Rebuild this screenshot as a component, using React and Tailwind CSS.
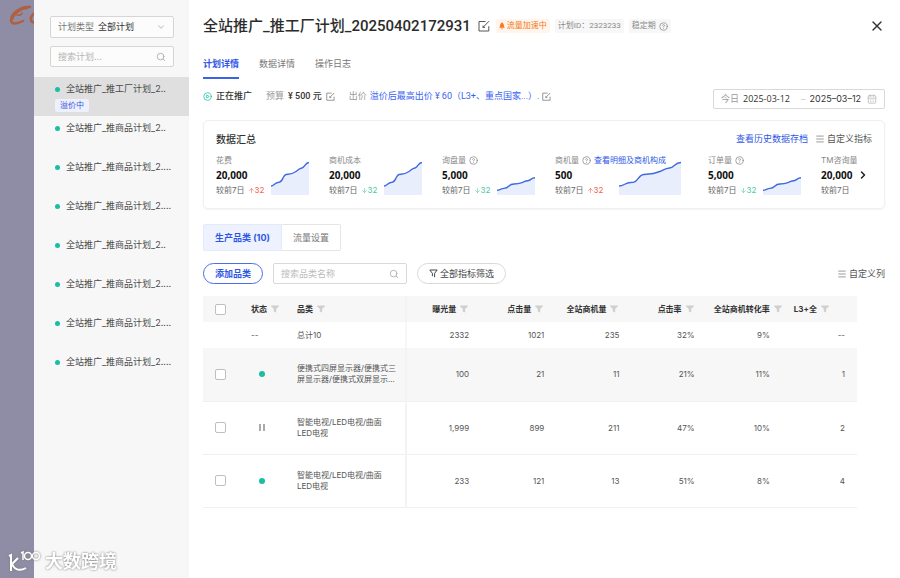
import { useState } from 'react';
import { ChevronDown, ChevronRight, Search, X, Menu, CircleHelp, CalendarDays, CirclePlay, ArrowUp, ArrowDown } from 'lucide-react';

const plans = [
  { id: 1, name: '全站推广_推工厂计划_2..', tag: '溢价中' },
  { id: 2, name: '全站推广_推商品计划_2..' },
  { id: 3, name: '全站推广_推商品计划_2....' },
  { id: 4, name: '全站推广_推商品计划_2....' },
  { id: 5, name: '全站推广_推商品计划_2..' },
  { id: 6, name: '全站推广_推商品计划_2....' },
  { id: 7, name: '全站推广_推商品计划_2....' },
  { id: 8, name: '全站推广_推商品计划_2....' },
];

const metrics = [
  { label: '花费', value: '20,000', diff: 32, up: true, chart: 'tall' },
  { label: '商机成本', value: '20,000', diff: 32, up: false, chart: 'tall' },
  { label: '询盘量', help: true, value: '5,000', diff: 32, up: false, chart: 'short' },
  { label: '商机量', help: true, link: '查看明细及商机构成', value: '500', diff: 32, up: true, chart: 'wide' },
  { label: '订单量', help: true, value: '5,000', diff: 32, up: false, chart: 'short' },
  { label: 'TM咨询量', value: '20,000', chart: 'tall' },
];

const chartSizes = {
  tall: 'w-[38px] h-[34px]',
  short: 'w-[38px] h-[18px]',
  wide: 'w-[62px] h-[34px]',
};

const numberColumns = ['曝光量', '点击量', '全站商机量', '点击率', '全站商机转化率'];

const rows = [
  { id: 1, running: true, name: '便携式四屏显示器/便携式三\n屏显示器/便携式双屏显示...', data: ['100', '21', '11', '21%', '11%', '1'] },
  { id: 2, running: false, name: '智能电视/LED电视/曲面\nLED电视', data: ['1,999', '899', '211', '47%', '10%', '2'] },
  { id: 3, running: true, name: '智能电视/LED电视/曲面\nLED电视', data: ['233', '121', '13', '51%', '8%', '4'] },
];

const EditIcon = ({ className }) => (
  <svg viewBox="0 0 12 12" className={className} fill="none" stroke="currentColor" strokeWidth="1">
    <path d="M7.5 1.5H1v9.5h9.8V6.2" />
    <path d="M5 7.4 11 1.2M5 5.6v1.8h2" />
  </svg>
);

const FunnelIcon = () => (
  <svg viewBox="0 0 8 8" className="size-2 shrink-0 text-[#cfcfcf]" fill="currentColor">
    <path d="M.2.6h7.6v1L5.2 3.8v3.8L2.8 6.6V3.8L.2 1.6z" />
  </svg>
);

const TrendChart = ({ size }) => (
  <svg viewBox="0 0 38 34" preserveAspectRatio="none" className={`mb-[2px] shrink-0 ${chartSizes[size]}`}>
    <path d="M0 25C3 25 4 21.500 7 21.500S10.500 20 12 17 14 13.500 17 13.300 22 12.500 25 10.500 28 7.500 31 7 34 1.500 38 1.500V34H0z" fill="#e9eefd" />
    <path
      d="M0 25C3 25 4 21.500 7 21.500S10.500 20 12 17 14 13.500 17 13.300 22 12.500 25 10.500 28 7.500 31 7 34 1.500 38 1.500"
      fill="none"
      stroke="#3f6ae0"
      strokeWidth="1.400"
      vectorEffect="non-scaling-stroke"
    />
  </svg>
);

const Checkbox = ({ label }) => (
  <input type="checkbox" aria-label={label} className="block size-[11px] appearance-none rounded-[2px] border border-[#bfbfbf] bg-white checked:bg-[#2f57e6]" />
);

const Sidebar = () => {
  const [active, setActive] = useState(1);

  return (
    <aside className="w-[155px] shrink-0 bg-[#f7f7f7] pt-4">
      <div className="mx-4 mr-[15px] flex h-[22px] items-center rounded-[2px] border border-[#d6d6d6] bg-[#fcfcfc] px-[7px]">
        <label htmlFor="plan-type" className="mr-1 shrink-0 text-[#777]">计划类型</label>
        <select id="plan-type" className="min-w-0 flex-1 appearance-none bg-transparent text-[#333] outline-none">
          <option>全部计划</option>
        </select>
        <ChevronDown className="size-[10px] shrink-0 text-[#aaa]" strokeWidth={2} />
      </div>
      <div className="mx-4 mt-2 mr-[15px] flex h-[21px] items-center rounded-[2px] border border-[#d6d6d6] bg-[#fcfcfc] px-[7px]">
        <input type="text" aria-label="搜索计划" placeholder="搜索计划..." className="min-w-0 flex-1 bg-transparent outline-none placeholder:text-[#b5b5b5]" />
        <Search className="size-[10px] shrink-0 text-[#aaa]" strokeWidth={2} />
      </div>

      {/* 计划列表 */}
      <ul className="mt-[10px]">
        {plans.map((plan) => (
          <li key={plan.id}>
            <button
              onClick={() => setActive(plan.id)}
              className={`flex h-[39px] w-full flex-col items-start pt-[6px] pl-[21px] text-left ${active === plan.id ? 'bg-[#dfdfdf]' : ''}`}
            >
              <span className="flex items-center gap-[6px] leading-3 whitespace-nowrap text-[#4a4a4a]">
                <span className="size-[5px] rounded-full bg-[#17bfa6]" />
                {plan.name}
              </span>
              {plan.tag && <span className="mt-1 rounded-[2px] bg-[#eef1fd] px-[5px] text-[8px] leading-[13px] text-[#3a55d8]">{plan.tag}</span>}
            </button>
          </li>
        ))}
      </ul>
    </aside>
  );
};

const PlanHeader = () => (
  <header>
    <div className="flex h-[22px] items-center font-[Roboto,'Noto_Sans_CJK_SC',sans-serif]">
      <h1 className="text-[15px] font-medium whitespace-nowrap text-[#2b2b2b]">全站推广_推工厂计划_20250402172931</h1>
      <button aria-label="编辑名称" className="mr-[6px] ml-[7px] text-[#555]"><EditIcon className="size-3" /></button>
      <div className="flex gap-[5px] text-[8px] leading-[14px] whitespace-nowrap text-[#8a8a8a]">
        <span className="flex items-center gap-[2px] rounded-[2px] bg-[#fff5ec] px-[3px] text-[#f57a23]">
          <svg viewBox="0 0 6 8" className="h-2 w-[6px]" fill="currentColor">
            <path d="M3 .3C4.600 1.500 5 2.800 5 4.200l.8 1.600H.2L1 4.200C1 2.800 1.400 1.500 3 .3zM2.200 6.200h1.600L3 7.800z" />
          </svg>
          流量加速中
        </span>
        <span className="rounded-[2px] bg-[#f7f7f7] px-[3px]">计划ID：2323233</span>
        <span className="flex items-center gap-[3px] rounded-[2px] bg-[#f7f7f7] px-[3px]">稳定期 <CircleHelp className="size-[9px]" /></span>
      </div>
      <button aria-label="关闭" className="ml-auto text-[#333]"><X className="size-4" strokeWidth={2} /></button>
    </div>

    <nav className="mt-[20px] flex gap-5 text-[#777]">
      <a href="#detail" className="border-b-2 border-[#3a62e8] pb-[6px] leading-[14px] font-bold text-[#2f57e6]">计划详情</a>
      <a href="#data" className="leading-[14px]">数据详情</a>
      <a href="#log" className="leading-[14px]">操作日志</a>
    </nav>

    <div className="mt-[10px] flex items-center whitespace-nowrap">
      <div className="flex h-5 items-center pb-[5px] font-[Roboto,'Noto_Sans_CJK_SC',sans-serif]">
        <CirclePlay className="size-[9px] text-[#17bfa6]" />
        <span className="ml-1 font-medium text-[#333]">正在推广</span>
        <span className="ml-[14px] text-[#999]">预算</span>
        <span className="ml-1 font-medium text-[#333]">¥ 500 元</span>
        <button aria-label="编辑预算" className="ml-1 text-[#777]"><EditIcon className="size-[9px]" /></button>
        <span className="ml-[14px] text-[#999]">出价</span>
        <a href="#bid" className="ml-[3px] text-[#3a62f0]">溢价后最高出价 ¥ 60（L3+、重点国家...）.</a>
        <button aria-label="编辑出价" className="ml-[3px] text-[#777]"><EditIcon className="size-[9px]" /></button>
      </div>
      <div className="ml-auto flex h-5 w-[172px] items-center rounded-[2px] border border-[#d9d9d9] px-[7px] text-[#333]">
        <label htmlFor="date-start" className="mr-1 text-[#999]">今日</label>
        <input id="date-start" type="text" defaultValue="2025-03-12" className="w-[54px] bg-transparent font-['Open_Sans'] font-medium outline-none" />
        <span className="mx-1 text-[#ccc]">–</span>
        <input aria-label="结束日期" type="text" defaultValue="2025–03–12" className="min-w-0 flex-1 bg-transparent outline-none" />
        <CalendarDays className="size-[10px] shrink-0 text-[#bbb]" />
      </div>
    </div>
  </header>
);

const Summary = () => (
  <section className="mt-[11px] rounded-[5px] border border-[#f0f0f0] px-3 py-[11px] shadow-xs shadow-black/5">
    <div className="flex h-[14px] items-center">
      <h2 className="text-[10px] font-medium text-[#333]">数据汇总</h2>
      <a href="#history" className="mr-[7px] ml-auto text-[#2f57e6]">查看历史数据存档</a>
      <button className="flex items-center gap-[2px] text-[#555]"><Menu className="size-[10px] text-[#888]" />自定义指标</button>
    </div>
    <div className="mt-[7px] flex items-center">
      <div className="flex min-w-0 flex-1 gap-5 overflow-hidden">
        {metrics.map((m) => (
          <div key={m.label} className={`flex shrink-0 items-end justify-between text-[8px] whitespace-nowrap ${m.chart === 'wide' ? 'w-[133px] pr-[7px]' : 'w-[93px]'}`}>
            <div className="w-[54px]">
              <div className="flex h-[14px] items-center gap-[3px] text-[#888]">
                {m.label}
                {m.help && <CircleHelp className="size-[9px] shrink-0" />}
                {m.link && <a href="#leads" className="text-[#2f57e6]">{m.link}</a>}
              </div>
              <div className="font-['Open_Sans'] text-[10px] leading-4 font-bold text-[#111]">{m.value}</div>
              <div className="flex h-[14px] items-center text-[#666]">
                较前7日
                {m.diff && (
                  <span className={`ml-[3px] flex items-center ${m.up ? 'text-[#f5634d]' : 'text-[#4cc9a4]'}`}>
                    {m.up ? <ArrowUp className="size-[7px]" /> : <ArrowDown className="size-[7px]" />}
                    {m.diff}
                  </span>
                )}
              </div>
            </div>
            <TrendChart size={m.chart} />
          </div>
        ))}
      </div>
      <button aria-label="下一页" className="flex w-[15px] shrink-0 text-[#222]"><ChevronRight className="size-3" strokeWidth={3} /></button>
    </div>
  </section>
);

const CategoryTable = () => (
  <div className="mt-3 pr-7">
    <table className="w-full table-fixed border-collapse text-[8px] text-[#555]">
      <thead>
        <tr className="h-[26px] bg-[#f7f7f7] text-[#333]">
          <th className="w-9 pl-3"><Checkbox label="全选" /></th>
          <th className="w-[46px] pl-3"><span className="flex items-center gap-1">状态 <FunnelIcon /></span></th>
          <th className="w-[121px] border-r-2 border-[#f3f3f3] pl-3"><span className="flex items-center gap-1">品类 <FunnelIcon /></span></th>
          {numberColumns.map((name) => (
            <th key={name} className={name === '全站商机转化率' ? 'pr-0' : 'pr-[13px]'}>
              <span className="flex items-center justify-end gap-1 whitespace-nowrap">{name} <FunnelIcon /></span>
            </th>
          ))}
          <th className="pl-3"><span className="flex items-center gap-1">L3+全 <FunnelIcon /></span></th>
        </tr>
      </thead>
      <tbody>
        <tr className="h-[26px]">
          <td />
          <td className="pl-3">--</td>
          <td className="border-r-2 border-[#f7f7f7] pl-3">总计10</td>
          {['2332', '1021', '235', '32%', '9%', '--'].map((v) => (
            <td key={v} className="pr-3 text-right">{v}</td>
          ))}
        </tr>
        {rows.map((row, index) => (
          <tr key={row.id} className={`h-[53px] border-b border-[#f0f0f0] ${index === 0 ? 'bg-[#f7f7f7]' : ''}`}>
            <td className="pl-3"><Checkbox label={row.name} /></td>
            <td>
              {row.running ? (
                <span className="mx-auto block size-[6px] rounded-full bg-[#17bfa6]" />
              ) : (
                <span className="mx-auto block h-[7px] w-[6px] border-x-2 border-[#aaa]" />
              )}
            </td>
            <td className="border-r-2 border-[#f3f3f3] pl-3 leading-[11px] whitespace-pre-line">{row.name}</td>
            {row.data.map((v, i) => (
              <td key={i} className="pr-3 text-right">{v}</td>
            ))}
          </tr>
        ))}
      </tbody>
    </table>
  </div>
);

const App = () => {
  return (
    <div className="relative flex min-h-screen bg-white font-[Inter,'Noto_Sans_CJK_SC',sans-serif] text-[9px]">
      <div className="w-[34px] shrink-0 overflow-hidden bg-[#8f8da5]">
        <svg viewBox="0 0 34 30" className="h-[30px] w-[34px]" fill="none" stroke="#b0603f" strokeLinecap="round">
          <path d="M30 7C20 6 11 14 11 20c0 5 6 4 12 1" strokeWidth="2.500" />
          <path d="M27 8c-7 0-13 6-15 11" strokeWidth="2.500" />
          <path d="M17 15c3 1 5-1 5-2" strokeWidth="1.500" />
          <path d="M37 13c-4 0-7 4-6 7 1 3 3 3 6 1" strokeWidth="2.500" />
        </svg>
      </div>
      <Sidebar />

      <main className="min-w-0 flex-1 pt-[15px] pr-[15px] pl-[14px]">
        <PlanHeader />
        <Summary />

        <div className="mt-[15px] flex h-[27px]">
          <button className="rounded-l-[2px] border border-[#e4eafc] bg-[#edf2fe] px-[11px] font-bold text-[#2f57e6]">生产品类 (10)</button>
          <button className="rounded-r-[2px] border border-l-0 border-[#e5e5e5] px-[11px] text-[#777]">流量设置</button>
        </div>

        <div className="mt-3 flex h-[21px] items-center">
          <button className="h-full rounded-full border border-[#4a6fea] px-[11px] font-bold text-[#2f57e6]">添加品类</button>
          <div className="ml-[10px] flex h-full w-[134px] items-center rounded-[2px] border border-[#d9d9d9] px-[7px]">
            <input type="text" aria-label="搜索品类名称" placeholder="搜索品类名称" className="min-w-0 flex-1 outline-none placeholder:text-[#bbb]" />
            <Search className="size-[10px] shrink-0 text-[#aaa]" />
          </div>
          <button className="ml-[10px] flex h-full items-center gap-[2px] rounded-full border border-[#d9d9d9] px-[11px] text-[#444]">
            <svg viewBox="0 0 9 9" className="size-[9px]" fill="none" stroke="currentColor">
              <path d="M.8 1h7.400L5.600 4.300v3.900M3.400 7.200V4.300L.8 1" />
            </svg>
            全部指标筛选
          </button>
          <button className="ml-auto flex items-center gap-[2px] text-[#555]"><Menu className="size-[10px] text-[#888]" />自定义列</button>
        </div>

        <CategoryTable />
      </main>

      {/* 左下角水印 */}
      <div className="pointer-events-none absolute bottom-1 left-2 flex items-center gap-1 text-white drop-shadow-[0_0_1px_#777]">
        <svg viewBox="0 0 33 24" className="h-6 w-[33px]" fill="none" stroke="currentColor" strokeWidth="2">
          <path d="M1 6l2-1v16M10 8l-6 6c2 5 7 8 14 4" />
          <path d="M13 3l2-1v8" strokeWidth="1.500" />
          <circle cx="20" cy="6" r="3.500" strokeWidth="1.500" />
          <circle cx="28" cy="6" r="3.500" strokeWidth="1.500" />
        </svg>
        <span className="text-[18px] leading-6 font-bold">大数跨境</span>
      </div>
    </div>
  );
};

export default App;
